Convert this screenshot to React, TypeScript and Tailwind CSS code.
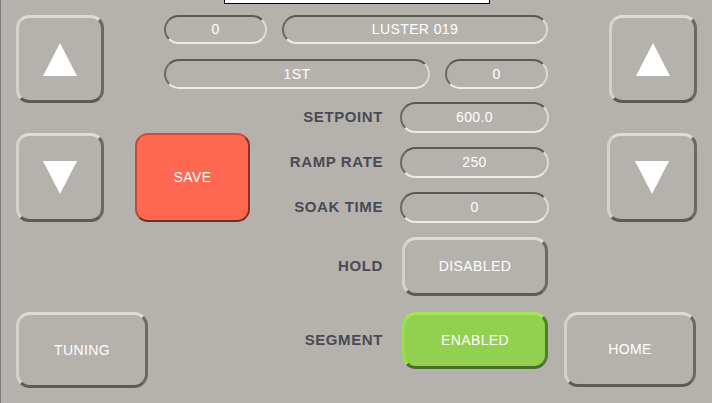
import React from "react";

const btnBevel =
  "border-[3px] border-t-[#dedbd2] border-l-[#d4d2c9] border-r-[#6a6963] border-b-[#5c5b56] box-border";
const fieldBevel =
  "border-[2px] border-t-[#5a5954] border-l-[#6a6964] border-r-[#dcdad2] border-b-[#ecebe4] box-border rounded-full flex items-center justify-center text-white text-[14px] tracking-[0.4px]";

function Field({ w, h, children }: { w: string; h: string; children: React.ReactNode }) {
  return <div className={`${fieldBevel} ${w} ${h}`}>{children}</div>;
}

function Tri({ down }: { down?: boolean }) {
  return (
    <svg width="34" height="33" viewBox="0 0 34 33">
      {down ? (
        <polygon points="0,0 34,0 17,33" fill="#ffffff" />
      ) : (
        <polygon points="17,0 34,33 0,33" fill="#ffffff" />
      )}
    </svg>
  );
}

function Label({ children }: { children: React.ReactNode }) {
  return (
    <div className="w-[133px] text-right font-bold text-[15px] tracking-[0.6px] text-[#4a4a54]">
      {children}
    </div>
  );
}

export default function App() {
  return (
    <div className="w-[712px] h-[403px] bg-[#b5b2ad] border-l border-[#7d7d7d] overflow-hidden font-['Liberation_Sans',Arial,sans-serif] box-border">
      {/* top white box */}
      <div className="ml-[223px] w-[266px] h-[4px] bg-white border border-t-0 border-black box-border" />

      {/* Row 1 */}
      <div className="flex items-start mt-[11px]">
        <div className={`ml-[15px] w-[88px] h-[88px] rounded-[13px] ${btnBevel} flex items-center justify-center`}>
          <Tri />
        </div>
        <div className="ml-[60px] flex flex-col">
          <div className="flex">
            <Field w="w-[103px]" h="h-[29px]">0</Field>
            <div className="ml-[15px]">
              <Field w="w-[266px]" h="h-[29px]">LUSTER 019</Field>
            </div>
          </div>
          <div className="flex mt-[15px]">
            <Field w="w-[266px]" h="h-[30px]">1ST</Field>
            <div className="ml-[15px]">
              <Field w="w-[103px]" h="h-[30px]">0</Field>
            </div>
          </div>
        </div>
        <div className={`ml-[61px] w-[88px] h-[88px] rounded-[13px] ${btnBevel} flex items-center justify-center`}>
          <Tri />
        </div>
      </div>

      {/* Row 2 */}
      <div className="flex items-start mt-[-1px]">
        <div className={`ml-[15px] mt-[31px] w-[88px] h-[89px] rounded-[13px] ${btnBevel} flex items-center justify-center`}>
          <Tri down />
        </div>
        <div className="ml-[31px] mt-[31px] w-[115px] h-[89px] rounded-[13px] bg-[#ff6850] border-[2px] border-t-[#c9503c] border-l-[#c04c38] border-r-[#8a3022] border-b-[#7a2a1e] box-border flex items-center justify-center text-white text-[14px] tracking-[0.4px]">
          SAVE
        </div>
        <div className="flex flex-col gap-[14px]">
          {[
            ["SETPOINT", "600.0"],
            ["RAMP RATE", "250"],
            ["SOAK TIME", "0"],
          ].map(([l, v]) => (
            <div key={l} className="flex items-center">
              <Label>{l}</Label>
              <div className="ml-[17px]">
                <Field w="w-[149px]" h="h-[31px]">{v}</Field>
              </div>
            </div>
          ))}
        </div>
        <div className={`ml-[58px] mt-[31px] w-[90px] h-[89px] rounded-[13px] ${btnBevel} flex items-center justify-center`}>
          <Tri down />
        </div>
      </div>

      {/* Row 3 */}
      <div className="flex items-center mt-[14px]">
        <div className="ml-[249px]">
          <Label>HOLD</Label>
        </div>
        <div className={`ml-[19px] w-[146px] h-[59px] rounded-[14px] ${btnBevel} flex items-center justify-center text-white text-[14px] tracking-[0.4px]`}>
          DISABLED
        </div>
      </div>

      {/* Row 4 */}
      <div className="flex items-start mt-[16px]">
        <div className={`ml-[15px] w-[132px] h-[76px] rounded-[14px] ${btnBevel} flex items-center justify-center text-white text-[14px] tracking-[0.4px]`}>
          TUNING
        </div>
        <div className="ml-[102px] h-[57px] flex items-center">
          <Label>SEGMENT</Label>
        </div>
        <div className="ml-[19px] w-[146px] h-[57px] rounded-[14px] bg-[#92d050] border-[3px] border-t-[#a6e25a] border-l-[#9adc52] border-r-[#4f7e2c] border-b-[#457026] box-border flex items-center justify-center text-white text-[14px] tracking-[0.4px]">
          ENABLED
        </div>
        <div className={`ml-[16px] w-[132px] h-[75px] rounded-[14px] ${btnBevel} flex items-center justify-center text-white text-[14px] tracking-[0.4px]`}>
          HOME
        </div>
      </div>
    </div>
  );
}
